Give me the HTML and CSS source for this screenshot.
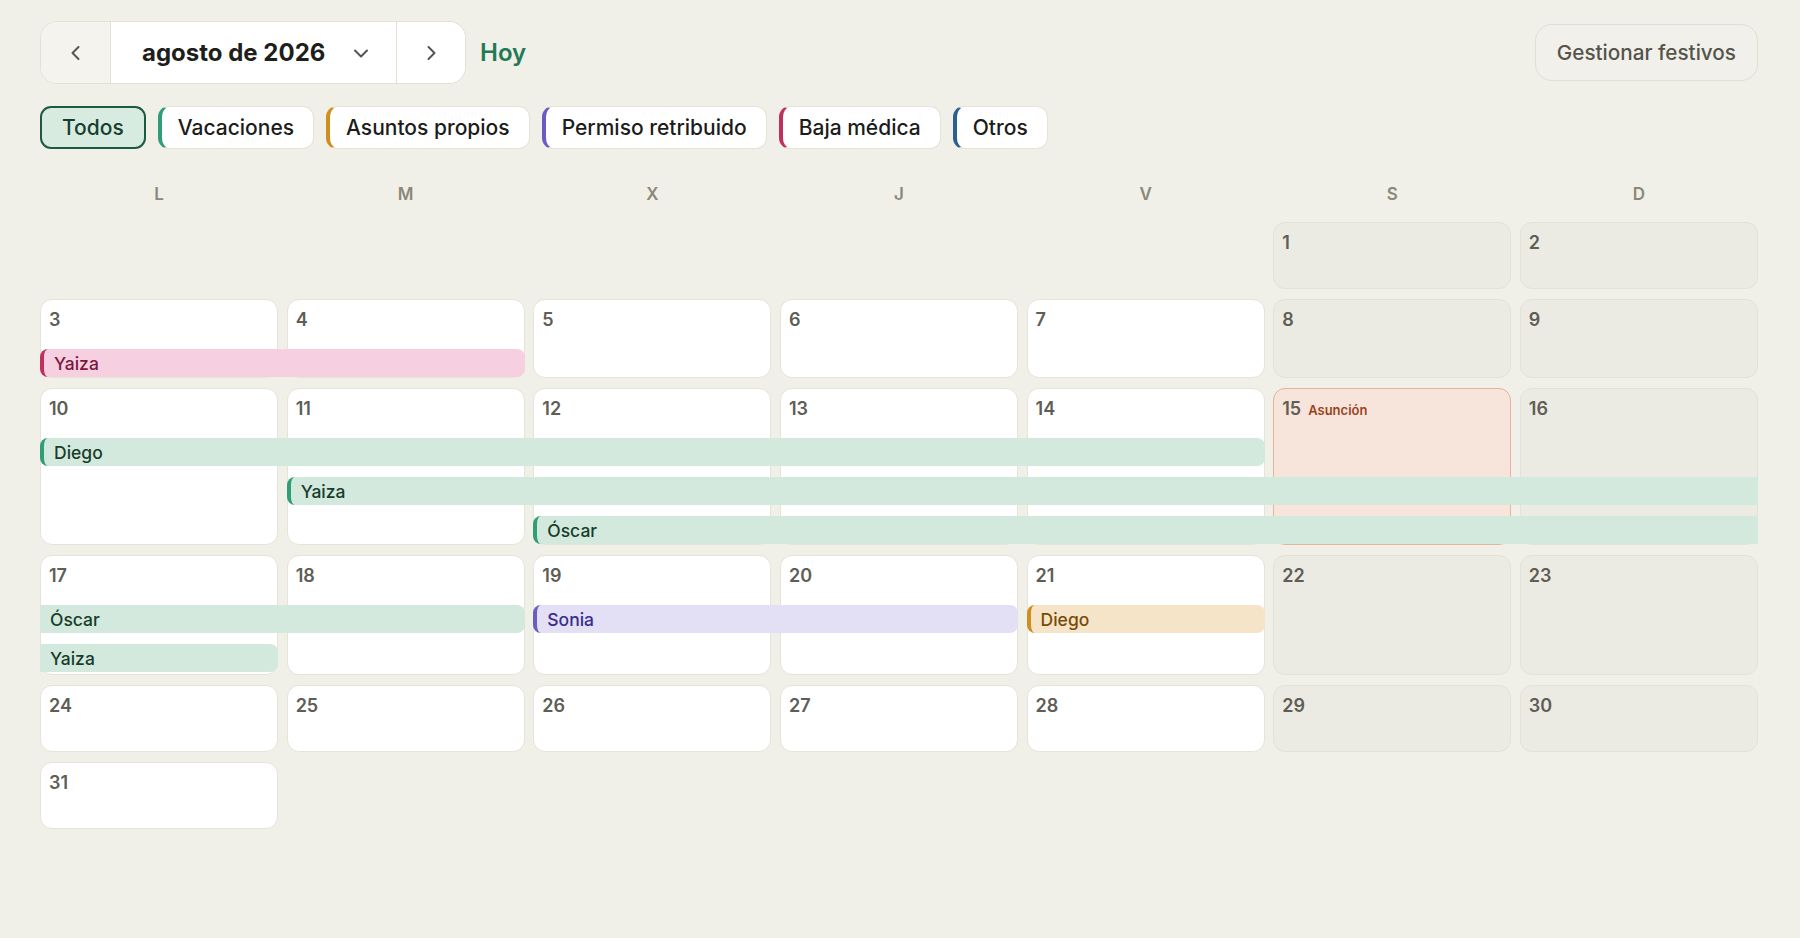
FILE: index.html
```html
<!DOCTYPE html>
<html lang="es">
<head>
<meta charset="utf-8">
<title>Calendario de ausencias</title>
<link rel="stylesheet" href="styles.css">
</head>
<body>
<div class="app">
  <header class="toolbar">
    <div class="nav">
      <button class="nav-btn prev" aria-label="Mes anterior">
        <svg viewBox="0 0 20 20" width="20" height="20"><path d="M12.5 4 L6.5 10 L12.5 16" fill="none" stroke="currentColor" stroke-width="2" stroke-linecap="round" stroke-linejoin="round"/></svg>
      </button>
      <button class="month">
        <span class="month-label">agosto de 2026</span>
        <svg viewBox="0 0 20 20" width="20" height="20"><path d="M4 7.5 L10 13.5 L16 7.5" fill="none" stroke="currentColor" stroke-width="2" stroke-linecap="round" stroke-linejoin="round"/></svg>
      </button>
      <button class="nav-btn next" aria-label="Mes siguiente">
        <svg viewBox="0 0 20 20" width="20" height="20"><path d="M7.5 4 L13.5 10 L7.5 16" fill="none" stroke="currentColor" stroke-width="2" stroke-linecap="round" stroke-linejoin="round"/></svg>
      </button>
    </div>
    <button class="today">Hoy</button>
    <button class="holidays">Gestionar festivos</button>
  </header>

  <div class="filters">
    <button class="chip active">Todos</button>
    <button class="chip vac">Vacaciones</button>
    <button class="chip own">Asuntos propios</button>
    <button class="chip paid">Permiso retribuido</button>
    <button class="chip sick">Baja médica</button>
    <button class="chip other">Otros</button>
  </div>

  <div class="weekdays">
    <div>L</div><div>M</div><div>X</div><div>J</div><div>V</div><div>S</div><div>D</div>
  </div>

  <div class="weeks">
    <div class="week w0">
      <div class="day weekend c6"><span class="num">1</span></div>
      <div class="day weekend c7"><span class="num">2</span></div>
    </div>

    <div class="week w1">
      <div class="day c1"><span class="num">3</span></div>
      <div class="day c2"><span class="num">4</span></div>
      <div class="day c3"><span class="num">5</span></div>
      <div class="day c4"><span class="num">6</span></div>
      <div class="day c5"><span class="num">7</span></div>
      <div class="day weekend c6"><span class="num">8</span></div>
      <div class="day weekend c7"><span class="num">9</span></div>
      <div class="bar sick start lane1" style="grid-column: 1 / 3">Yaiza</div>
    </div>

    <div class="week w3">
      <div class="day c1"><span class="num">10</span></div>
      <div class="day c2"><span class="num">11</span></div>
      <div class="day c3"><span class="num">12</span></div>
      <div class="day c4"><span class="num">13</span></div>
      <div class="day c5"><span class="num">14</span></div>
      <div class="day holiday c6"><span class="num">15</span><span class="holiday-name">Asunción</span></div>
      <div class="day weekend c7"><span class="num">16</span></div>
      <div class="bar vac start lane1" style="grid-column: 1 / 6">Diego</div>
      <div class="bar vac start cont-right lane2" style="grid-column: 2 / 8">Yaiza</div>
      <div class="bar vac start cont-right lane3" style="grid-column: 3 / 8">Óscar</div>
    </div>

    <div class="week w2">
      <div class="day c1"><span class="num">17</span></div>
      <div class="day c2"><span class="num">18</span></div>
      <div class="day c3"><span class="num">19</span></div>
      <div class="day c4"><span class="num">20</span></div>
      <div class="day c5"><span class="num">21</span></div>
      <div class="day weekend c6"><span class="num">22</span></div>
      <div class="day weekend c7"><span class="num">23</span></div>
      <div class="bar vac cont-left lane1" style="grid-column: 1 / 3">Óscar</div>
      <div class="bar paid start lane1" style="grid-column: 3 / 5">Sonia</div>
      <div class="bar own start lane1" style="grid-column: 5 / 6">Diego</div>
      <div class="bar vac cont-left lane2" style="grid-column: 1 / 2">Yaiza</div>
    </div>

    <div class="week w0">
      <div class="day c1"><span class="num">24</span></div>
      <div class="day c2"><span class="num">25</span></div>
      <div class="day c3"><span class="num">26</span></div>
      <div class="day c4"><span class="num">27</span></div>
      <div class="day c5"><span class="num">28</span></div>
      <div class="day weekend c6"><span class="num">29</span></div>
      <div class="day weekend c7"><span class="num">30</span></div>
    </div>

    <div class="week w0">
      <div class="day c1"><span class="num">31</span></div>
    </div>
  </div>
</div>
</body>
</html>
```

FILE: styles.css
```css
* { box-sizing: border-box; }

body {
  margin: 0;
  background: #f0efe8;
  font-family: Inter, "Noto Sans", "Liberation Sans", sans-serif;
  color: #1f1f1c;
}

button {
  font-family: inherit;
  cursor: pointer;
}

.app {
  padding: 21px 42px 0 40px;
}

/* Toolbar */
.toolbar {
  display: flex;
  align-items: center;
  height: 63px;
}

.nav {
  display: flex;
  height: 63px;
  border: 1px solid #e3e0d5;
  border-radius: 17px;
  overflow: hidden;
  background: #fff;
}

.nav-btn {
  border: 0;
  padding: 0;
  background: #fff;
  color: #55544e;
  display: flex;
  align-items: center;
  justify-content: center;
}

.nav-btn.prev {
  width: 70px;
  background: #f4f3ee;
  border-right: 1px solid #e3e0d5;
}

.nav-btn.next {
  width: 69px;
  border-left: 1px solid #e3e0d5;
}

.month {
  width: 285px;
  border: 0;
  background: #fff;
  display: flex;
  align-items: center;
  justify-content: space-between;
  padding: 0 25px 0 31px;
  color: #55544e;
}

.month-label {
  font-size: 24px;
  font-weight: 700;
  color: #1e1e1b;
}

.today {
  margin-left: 14px;
  border: 0;
  background: none;
  padding: 0;
  font-size: 24px;
  font-weight: 600;
  color: #1f7a57;
}

.holidays {
  margin-left: auto;
  height: 57px;
  padding: 0 21px;
  border: 1px solid #e1ded3;
  border-radius: 17px;
  background: #f1f0ea;
  font-size: 20.7px;
  font-weight: 500;
  color: #55544b;
}

/* Filters */
.filters {
  display: flex;
  gap: 12px;
  margin-top: 22px;
}

.chip {
  height: 43px;
  padding: 0 19px 0 16px;
  border-radius: 11px;
  background: #fff;
  border: 1px solid #e6e3d9;
  border-left-width: 4px;
  font-size: 21px;
  font-weight: 500;
  color: #1c1c1a;
}

.chip.active {
  padding: 0 20px;
  border: 2px solid #1d5a43;
  background: #d7ebe0;
  color: #173f30;
}

.chip.vac { border-left-color: #2f9e76; }
.chip.own { border-left-color: #d08e1f; }
.chip.paid { border-left-color: #6b5cc4; }
.chip.sick { border-left-color: #c0305f; }
.chip.other { border-left-color: #2d5f8f; }

/* Weekdays */
.weekdays {
  display: grid;
  grid-template-columns: repeat(7, minmax(0, 1fr));
  column-gap: 8.5px;
  margin: 30px 0 13px;
  height: 30px;
  align-items: center;
  text-align: center;
  font-size: 17px;
  font-weight: 600;
  color: #8b8878;
}

/* Weeks */
.weeks {
  display: flex;
  flex-direction: column;
  gap: 10px;
}

.week {
  display: grid;
  grid-template-columns: repeat(7, minmax(0, 1fr));
  column-gap: 8.5px;
}

.w0 { grid-template-rows: 67px; }
.w1 { grid-template-rows: 50px 28px 1px; }
.w2 { grid-template-rows: 50px 28px 11px 28px 3px; }
.w3 { grid-template-rows: 50px 28px 11px 28px 11px 28px 1px; }

.c1 { grid-column: 1; }
.c2 { grid-column: 2; }
.c3 { grid-column: 3; }
.c4 { grid-column: 4; }
.c5 { grid-column: 5; }
.c6 { grid-column: 6; }
.c7 { grid-column: 7; }

.day {
  grid-row: 1 / -1;
  background: #fff;
  border: 1px solid #e6e3d8;
  border-radius: 12px;
  padding: 9px 8px;
  display: flex;
  align-items: baseline;
  gap: 7px;
}

.day.weekend {
  background: #ecebe3;
  border-color: #e4e1d6;
}

.day.holiday {
  background: #f7e4da;
  border-color: #e7b39b;
}

.num {
  font-size: 18px;
  line-height: 22px;
  font-weight: 600;
  color: #5e5d56;
}

.holiday-name {
  font-size: 13px;
  font-weight: 600;
  color: #9c4420;
}

/* Event bars */
.bar {
  align-self: start;
  height: 28px;
  border-radius: 8px;
  display: flex;
  align-items: center;
  padding-left: 10px;
  font-size: 17.5px;
  font-weight: 500;
  white-space: nowrap;
  overflow: hidden;
}

.lane1 { grid-row: 2; }
.lane2 { grid-row: 4; }
.lane3 { grid-row: 6; }

.bar.start { border-left: 4px solid; }
.bar.cont-left { border-top-left-radius: 0; border-bottom-left-radius: 0; }
.bar.cont-right { border-top-right-radius: 0; border-bottom-right-radius: 0; }

.bar.vac { background: #d3e9dd; border-left-color: #2f9e76; color: #173d2c; }
.bar.own { background: #f5e4c8; border-left-color: #d08e1f; color: #7a4a06; }
.bar.paid { background: #e3dff5; border-left-color: #6b5cc4; color: #3a2d8c; }
.bar.sick { background: #f6cfe0; border-left-color: #c0305f; color: #7c1740; }
```
